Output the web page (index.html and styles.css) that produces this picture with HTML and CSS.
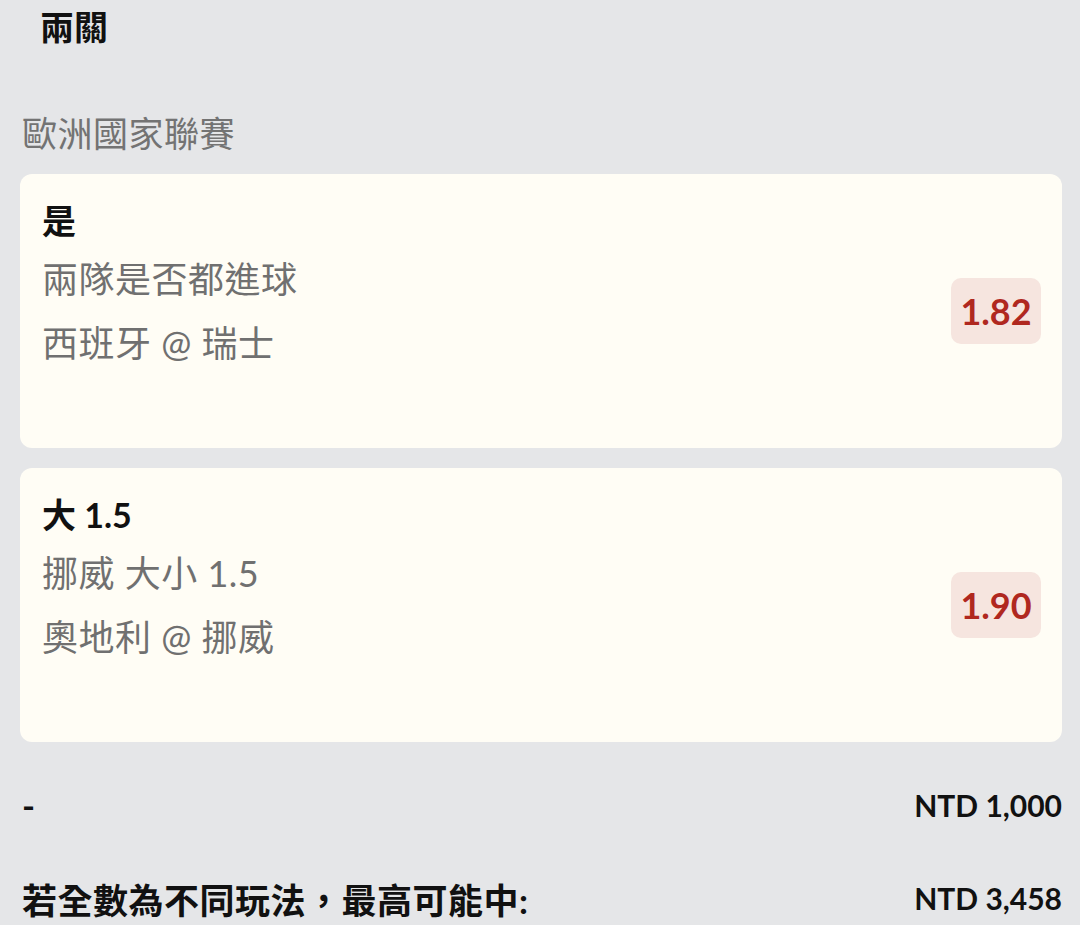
FILE: index.html
```html
<!DOCTYPE html>
<html lang="zh-Hant">
  <head>
    <meta charset="UTF-8" />
    <meta name="viewport" content="width=device-width, initial-scale=1.0" />
    <title>兩關</title>
    <link rel="stylesheet" href="styles.css">
  </head>
  <body>
    <h1 class="slip-title">兩關</h1>

    <div class="league">歐洲國家聯賽</div>

    <div class="bet-list">
      <div class="bet-card">
        <div class="bet-info">
          <div class="bet-pick">是</div>
          <div class="bet-market">兩隊是否都進球</div>
          <div class="bet-match">西班牙 @ 瑞士</div>
        </div>
        <div class="bet-odds">1.82</div>
      </div>

      <div class="bet-card">
        <div class="bet-info">
          <div class="bet-pick">大 1.5</div>
          <div class="bet-market">挪威 大小 1.5</div>
          <div class="bet-match">奧地利 @ 挪威</div>
        </div>
        <div class="bet-odds">1.90</div>
      </div>
    </div>

    <div class="summary">
      <div class="summary-row">
        <span class="summary-label">-</span>
        <span class="summary-value">NTD 1,000</span>
      </div>
      <div class="summary-row">
        <span class="summary-label">若全數為不同玩法，最高可能中:</span>
        <span class="summary-value">NTD 3,458</span>
      </div>
    </div>
  </body>
</html>
```

FILE: styles.css
```css
body {
  margin: 0;
  padding: 0 18px 0 20px;
  background-color: #e5e6e8;
  font-family: Lato, "Noto Sans CJK TC", sans-serif;
  color: #111111;
}
.slip-title {
  margin: 0;
  padding: 6px 0 0 20px;
  font-size: 34px;
  font-weight: 700;
  line-height: 42px;
}
.league {
  margin-top: 62px;
  padding-left: 2px;
  font-size: 35px;
  line-height: 46px;
  letter-spacing: 0.5px;
  color: #737373;
}
.bet-list {
  margin-top: 18px;
  display: flex;
  flex-direction: column;
  gap: 20px;
}
.bet-card {
  background-color: #fffdf5;
  border-radius: 12px;
  padding: 26px 21px 76px 22px;
  display: flex;
  align-items: center;
  justify-content: space-between;
}
.bet-info {
  display: flex;
  flex-direction: column;
}
.bet-pick {
  font-size: 34px;
  font-weight: 700;
  line-height: 42px;
  color: #111111;
}
.bet-market,
.bet-match {
  font-size: 36px;
  line-height: 58px;
  color: #707070;
  letter-spacing: 0.5px;
}
.bet-market {
  margin-top: 8px;
}
.bet-match {
  margin-top: 6px;
}
.bet-odds {
  align-self: center;
  margin-top: 49px;
  width: 90px;
  height: 66px;
  border-radius: 10px;
  background-color: #f6e5df;
  color: #b0281f;
  font-size: 36px;
  font-weight: 700;
  display: flex;
  align-items: center;
  justify-content: center;
}
.summary {
  margin-top: 38px;
  display: flex;
  flex-direction: column;
  gap: 43px;
}
.summary-row {
  display: flex;
  align-items: center;
  justify-content: space-between;
  height: 50px;
  padding-left: 2px;
}
.summary-label {
  font-size: 35px;
  font-weight: 700;
  letter-spacing: 0.5px;
}
.summary-value {
  font-size: 30px;
  font-weight: 700;
}
```
